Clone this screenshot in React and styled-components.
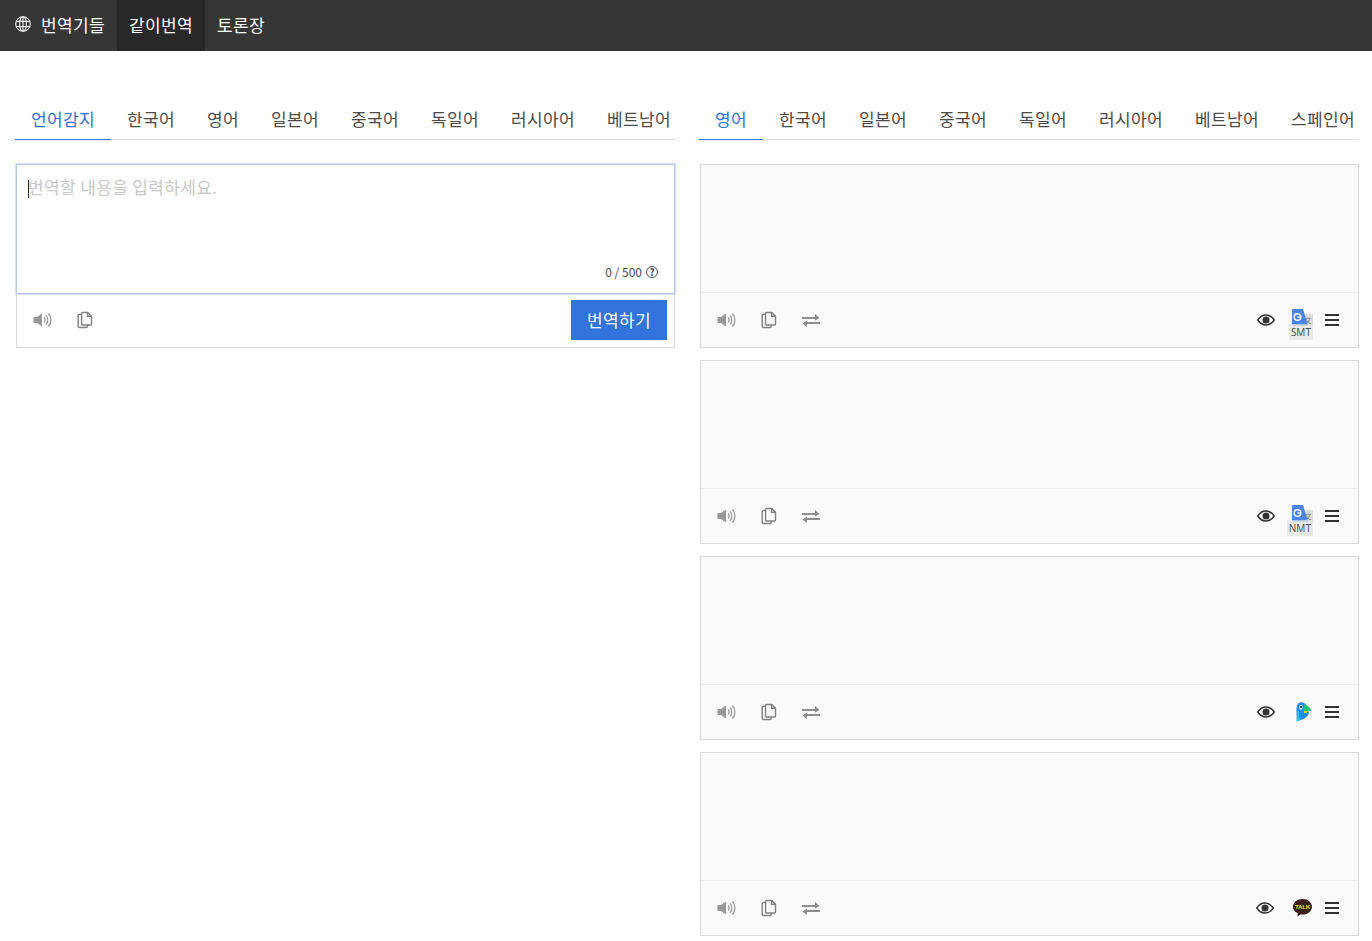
import React from 'react';
import styled, { createGlobalStyle } from 'styled-components';

const SOURCE_TABS = ['언어감지', '한국어', '영어', '일본어', '중국어', '독일어', '러시아어', '베트남어'];
const TARGET_TABS = ['영어', '한국어', '일본어', '중국어', '독일어', '러시아어', '베트남어', '스페인어'];

const GlobeIcon = () => (
  <svg width="16" height="16" viewBox="0 0 16 16" fill="none" stroke="#eee" strokeWidth="1.1">
    <circle cx="8" cy="8" r="7.3" />
    <ellipse cx="8" cy="8" rx="3.4" ry="7.3" />
    <path d="M8 .7v14.600M1 5.400h14M1 10.600h14" />
  </svg>
);

const SpeakerIcon = () => (
  <svg width="20" height="18" viewBox="0 0 20 18" fill="none" stroke="#999">
    <path d="M0.500 6h3.500L9 2.500v13L4 12H0.500z" fill="#999" stroke="none" />
    <path d="M11 6.500a3.500 3.500 0 0 1 0 5M13 4.500a6.500 6.500 0 0 1 0 9M15.500 2.500a10 10 0 0 1 0 13" strokeWidth="1.300" />
  </svg>
);

const CopyIcon = () => (
  <svg width="16" height="18" viewBox="0 0 16 18" fill="none" stroke="#808080" strokeWidth="1.400">
    <path d="M4.500 3.500H2.200a1 1 0 0 0-1 1v11a1 1 0 0 0 1 1h7a1 1 0 0 0 1-1v-1.500" />
    <path d="M4.600 2.500a1 1 0 0 1 1-1h5l3.900 3.800V13a1 1 0 0 1-1 1H5.600a1 1 0 0 1-1-1z" fill="#fff" />
    <path d="M10.600 1.500v3.800h3.900" />
  </svg>
);

const SwapIcon = () => (
  <svg width="18" height="13" viewBox="0 0 18 13" fill="#8c8c8c">
    <path d="M0 3h13V0l4.500 4L13 6.500V5H0z" />
    <path d="M18 8H5V6.500L0.500 9.500 5 13v-3h13z" />
  </svg>
);

const EyeIcon = () => (
  <svg width="18" height="12" viewBox="0 0 18 12">
    <path d="M.8 6C3 2.600 5.800 1 9 1s6 1.600 8.200 5C15 9.400 12.200 11 9 11S3 9.400.8 6z" fill="#fff" stroke="#333" strokeWidth="1.500" />
    <circle cx="9" cy="6" r="3.500" fill="#333" />
  </svg>
);

const MenuIcon = () => (
  <svg width="14" height="12" viewBox="0 0 14 12" fill="#333">
    <rect y="0" width="14" height="2" />
    <rect y="5" width="14" height="2" />
    <rect y="10" width="14" height="2" />
  </svg>
);

const GoogleMark = () => (
  <svg width="24" height="22" viewBox="0 0 24 22">
    <rect x="11" y="5" width="13" height="12" fill="#dedede" />
    <text x="15.500" y="13.500" fontSize="7" fill="#777" fontFamily="Noto Sans CJK KR, sans-serif">文</text>
    <path d="M4 0h10l5 16.500H4a1 1 0 0 1-1-1V1a1 1 0 0 1 1-1z" fill="#4a86e8" />
    <circle cx="8.500" cy="8" r="3.300" fill="none" stroke="#fff" strokeWidth="1.500" />
    <path d="M8.500 8h3.500" stroke="#fff" strokeWidth="1.300" />
  </svg>
);

const PapagoMark = () => (
  <svg width="24" height="20" viewBox="0 0 24 20">
    <g transform="translate(7 0)">
      <path d="M4 .5C7 0 9 1 10 3l3 8c-1 3-4 5.500-7 6.500l-5.500 2C1 15 .2 10 .5 6 .8 3 2 1 4 .5z" fill="#1a8fef" />
      <path d="M1.500 9c.5 4 0 7.500-1 10.500L4 18c-1-3-1.500-6-1-9z" fill="#35c9ee" />
      <path d="M8 2.500c3.500.5 6.500 3 7.500 6.500H8z" fill="#19c37d" />
      <path d="M8 9h4L10.500 11H8z" fill="#f7d11e" />
      <rect x="3.500" y="3" width="3" height="4.500" rx="1.200" fill="#fff" />
      <circle cx="5" cy="5" r="1.100" fill="#123" />
    </g>
  </svg>
);

const KakaoMark = () => (
  <svg width="24" height="20" viewBox="0 0 24 20">
    <g transform="translate(3.500 .5)">
      <path d="M10 .500c5.300 0 9.500 3.400 9.500 7.800s-4.200 7.800-9.500 7.800c-.8 0-1.500-.1-2.200-.2L5 18l.2-3.300C2 13.300.5 11 .5 8.300.5 3.900 4.700.5 10 .500z" fill="#3b1e1e" />
      <text x="10" y="10.500" fontSize="6.200" fontWeight="700" textAnchor="middle" fill="#f5d50b" fontFamily="Liberation Sans, sans-serif" letterSpacing="-.3">TALK</text>
    </g>
  </svg>
);

const RESULTS = [
  { id: 'smt', mark: <GoogleMark />, label: 'SMT' },
  { id: 'nmt', mark: <GoogleMark />, label: 'NMT' },
  { id: 'papago', mark: <PapagoMark /> },
  { id: 'kakao', mark: <KakaoMark />, shiftEye: true },
];

const LangTabs = ({ tabs }) => (
  <TabBar>
    {tabs.map((tab, i) => (
      <Tab key={tab} $active={i === 0}>{tab}</Tab>
    ))}
  </TabBar>
);

const ResultCard = ({ mark, label, shiftEye }) => (
  <Card>
    <CardBody />
    <CardFooter>
      <ToolButton><SpeakerIcon /></ToolButton>
      <ToolButton><CopyIcon /></ToolButton>
      <ToolButton><SwapIcon /></ToolButton>
      <FooterRight>
        <EyeSlot $shift={shiftEye}><EyeIcon /></EyeSlot>
        <EngineMark>
          {mark}
          {label && <EngineLabel>{label}</EngineLabel>}
        </EngineMark>
        <MenuSlot><MenuIcon /></MenuSlot>
      </FooterRight>
    </CardFooter>
  </Card>
);

export default function App() {
  return (
    <>
      <GlobalStyle />
      <NavBar>
        <NavItem>
          <GlobeIcon />
          번역기들
        </NavItem>
        <NavItem $active>같이번역</NavItem>
        <NavItem>토론장</NavItem>
      </NavBar>
      <Main>
        <Column>
          <LangTabs tabs={SOURCE_TABS} />
          <SourceBox>
            <InputWrap>
              <SourceInput placeholder="번역할 내용을 입력하세요." />
              <Caret />
              <Counter>
                0 / 500
                <HelpMark>?</HelpMark>
              </Counter>
            </InputWrap>
            <SourceFooter>
              <ToolButton><SpeakerIcon /></ToolButton>
              <ToolButton><CopyIcon /></ToolButton>
              <TranslateButton>번역하기</TranslateButton>
            </SourceFooter>
          </SourceBox>
        </Column>
        <Column>
          <LangTabs tabs={TARGET_TABS} />
          <CardList>
            {RESULTS.map((r) => (
              <ResultCard key={r.id} {...r} />
            ))}
          </CardList>
        </Column>
      </Main>
    </>
  );
}

const GlobalStyle = createGlobalStyle`
  * {
    box-sizing: border-box;
  }

  html,
  body {
    margin: 0;
    background: #fff;
    overflow-x: hidden;
  }

  body {
    font-family: 'Noto Sans CJK KR', 'Noto Sans', sans-serif;
    font-size: 17px;
    letter-spacing: 0.36px;
    color: #4a4a4a;
  }
`;

const NavBar = styled.nav`
  display: flex;
  height: 51px;
  background: #363636;
`;

const NavItem = styled.a`
  display: flex;
  align-items: center;
  gap: 10px;
  padding: 0 12px 3px 15px;
  color: #fff;
  background: ${(p) => (p.$active ? '#282828' : 'transparent')};

  & + & {
    padding-left: 12px;
  }
`;

const Main = styled.main`
  display: grid;
  grid-template-columns: 660px 660px;
  gap: 24px;
  padding: 48px 0 0 15px;
`;

const Column = styled.section`
  min-width: 0;
`;

const TabBar = styled.div`
  display: flex;
  height: 41px;
  border-bottom: 1px solid #dbdbdb;
  white-space: nowrap;
`;

const Tab = styled.a`
  flex: none;
  height: 41px;
  padding: 8px 16px 0;
  line-height: 24px;
  color: ${(p) => (p.$active ? '#3273dc' : '#4a4a4a')};
  border-bottom: 1px solid ${(p) => (p.$active ? '#3273dc' : 'transparent')};
`;

const SourceBox = styled.div`
  margin: 24px 0 0 1px;
  border: 1px solid #dbdbdb;
  border-top: 0;
`;

const InputWrap = styled.div`
  position: relative;
  height: 130px;
  margin: 0 -1px;
`;

const SourceInput = styled.textarea`
  display: block;
  width: 100%;
  height: 100%;
  padding: 10px 11px;
  border: 1px solid #b6c8e8;
  border-radius: 0;
  box-shadow: 0 0 0 1px #d5e1f8;
  outline: none;
  resize: none;
  font: inherit;
  letter-spacing: inherit;
  line-height: 24px;
  color: #363636;

  &::placeholder {
    color: #c8c8c8;
  }
`;

const Caret = styled.span`
  position: absolute;
  left: 12px;
  top: 16px;
  width: 1px;
  height: 18px;
  background: #222;
`;

const Counter = styled.div`
  position: absolute;
  right: 17px;
  bottom: 14px;
  display: flex;
  align-items: center;
  gap: 4px;
  font-size: 12px;
  letter-spacing: 0;
  line-height: 16px;
`;

const HelpMark = styled.span`
  display: flex;
  align-items: center;
  justify-content: center;
  width: 12px;
  height: 12px;
  border: 1.500px solid #4a4a4a;
  border-radius: 50%;
  font-size: 10px;
  font-weight: 700;
`;

const SourceFooter = styled.div`
  display: flex;
  align-items: center;
  height: 53px;
  padding: 0 7px 1px 0;
`;

const ToolButton = styled.span`
  display: flex;
  align-items: center;
  justify-content: center;
  width: 42px;
  height: 40px;

  &:first-child {
    margin-left: 5px;
  }
`;

const TranslateButton = styled.button`
  height: 40px;
  width: 96px;
  margin-left: auto;
  padding: 0 0 2px;
  border: 0;
  background: #3273dc;
  color: #fff;
  font: inherit;
  letter-spacing: inherit;
`;

const CardList = styled.div`
  display: flex;
  flex-direction: column;
  gap: 12px;
  margin: 24px 0 0 1px;
`;

const Card = styled.article`
  height: 184px;
  border: 1px solid #dbdbdb;
  background: #fafafa;
  display: flex;
  flex-direction: column;
`;

const CardBody = styled.div`
  flex: 1;
  border-bottom: 1px solid #efefef;
`;

const CardFooter = styled.div`
  display: flex;
  align-items: center;
  height: 54px;
  flex: none;
`;

const FooterRight = styled.div`
  display: flex;
  align-items: center;
  margin-left: auto;
`;

const EyeSlot = styled.span`
  display: flex;
  margin-right: ${(p) => (p.$shift ? '15px' : '14px')};
`;

const EngineMark = styled.span`
  position: relative;
  display: flex;
  justify-content: center;
  width: 24px;
`;

const EngineLabel = styled.span`
  position: absolute;
  right: 0;
  bottom: -9px;
  padding: 0 2px;
  background: rgba(225, 225, 225, 0.7);
  font-family: 'Noto Sans', sans-serif;
  font-size: 10px;
  letter-spacing: 0;
  line-height: 16px;
  color: #555;
`;

const MenuSlot = styled.span`
  display: flex;
  margin: 0 19px 0 12px;
`;
